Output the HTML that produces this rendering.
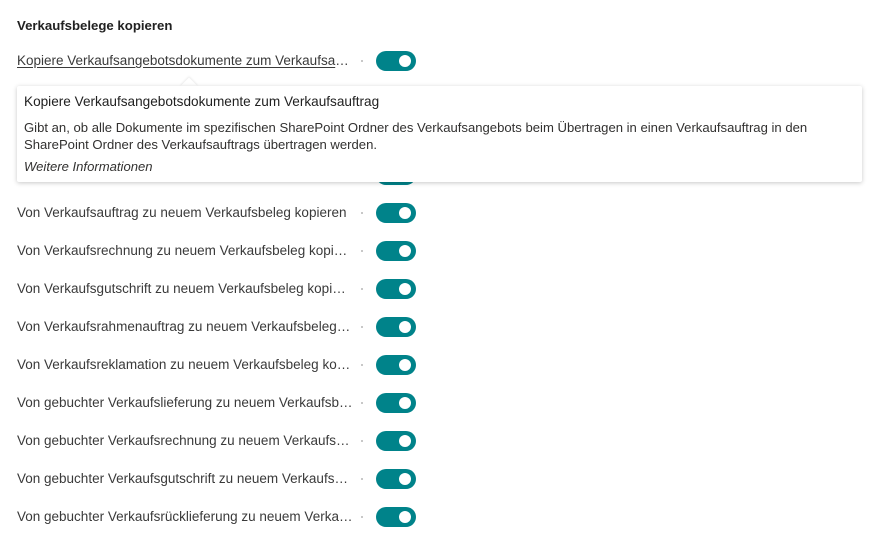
<!DOCTYPE html>
<html><head><meta charset="utf-8"><style>
body{margin:0;width:874px;height:548px;background:#fff;font-family:"Liberation Sans",sans-serif;color:#323130;position:relative;overflow:hidden}
.h{position:absolute;left:17px;top:18px;font-size:13.2px;font-weight:bold;color:#212121}
.row{position:absolute;left:17px;height:20px;width:400px}
.t{position:absolute;left:0;top:2px;width:336px;font-size:13.5px;white-space:nowrap;overflow:hidden;text-overflow:ellipsis;color:#3a3a3a}
.t.u{text-decoration:underline;text-underline-offset:2px}
.d{position:absolute;left:344px;top:9px;width:2px;height:2px;background:#c8c8c8}
.tg{position:absolute;left:359px;top:0;width:40px;height:20px;border-radius:10px;background:#00838a}
.tg::after{content:"";position:absolute;left:23px;top:4px;width:12px;height:12px;border-radius:6px;background:#fff}
.tip{position:absolute;left:17px;top:86px;width:845px;height:96px;background:#fff;box-shadow:0 1px 5px rgba(0,0,0,.22);border-radius:2px;font-size:13.1px;color:#323130}
.arr{position:absolute;left:183px;top:80px;width:12px;height:12px;background:#fff;transform:rotate(45deg);box-shadow:-1px -1px 2px rgba(0,0,0,.08)}
.tip .ti{position:absolute;left:7px;top:8px;font-size:13.6px;color:#212121}
.tip .b{position:absolute;left:7px;top:33px;line-height:17px;width:835px}
.tip .l{position:absolute;left:7px;top:73px;font-style:italic}
</style></head><body>
<div class="h">Verkaufsbelege kopieren</div>
<div class="row" style="top:51px"><div class="t u">Kopiere Verkaufsangebotsdokumente zum Verkaufsauftrag</div><div class="d"></div><div class="tg"></div></div>
<div class="row" style="top:165px"><div class="t">Von Verkaufsangebot zu neuem Verkaufsbeleg kopieren</div><div class="d"></div><div class="tg"></div></div>
<div class="row" style="top:203px"><div class="t">Von Verkaufsauftrag zu neuem Verkaufsbeleg kopieren</div><div class="d"></div><div class="tg"></div></div>
<div class="row" style="top:241px"><div class="t">Von Verkaufsrechnung zu neuem Verkaufsbeleg kopieren</div><div class="d"></div><div class="tg"></div></div>
<div class="row" style="top:279px"><div class="t">Von Verkaufsgutschrift zu neuem Verkaufsbeleg kopieren</div><div class="d"></div><div class="tg"></div></div>
<div class="row" style="top:317px"><div class="t">Von Verkaufsrahmenauftrag zu neuem Verkaufsbeleg kopieren</div><div class="d"></div><div class="tg"></div></div>
<div class="row" style="top:355px"><div class="t">Von Verkaufsreklamation zu neuem Verkaufsbeleg kopieren</div><div class="d"></div><div class="tg"></div></div>
<div class="row" style="top:393px"><div class="t">Von gebuchter Verkaufslieferung zu neuem Verkaufsbeleg kopieren</div><div class="d"></div><div class="tg"></div></div>
<div class="row" style="top:431px"><div class="t">Von gebuchter Verkaufsrechnung zu neuem Verkaufsbeleg kopieren</div><div class="d"></div><div class="tg"></div></div>
<div class="row" style="top:469px"><div class="t">Von gebuchter Verkaufsgutschrift zu neuem Verkaufsbeleg kopieren</div><div class="d"></div><div class="tg"></div></div>
<div class="row" style="top:507px"><div class="t">Von gebuchter Verkaufsrücklieferung zu neuem Verkaufsbeleg kopieren</div><div class="d"></div><div class="tg"></div></div>
<div class="arr"></div>
<div class="tip">
<div class="ti">Kopiere Verkaufsangebotsdokumente zum Verkaufsauftrag</div>
<div class="b">Gibt an, ob alle Dokumente im spezifischen SharePoint Ordner des Verkaufsangebots beim Übertragen in einen Verkaufsauftrag in den<br>SharePoint Ordner des Verkaufsauftrags übertragen werden.</div>
<div class="l">Weitere Informationen</div>
</div>
</body></html>
